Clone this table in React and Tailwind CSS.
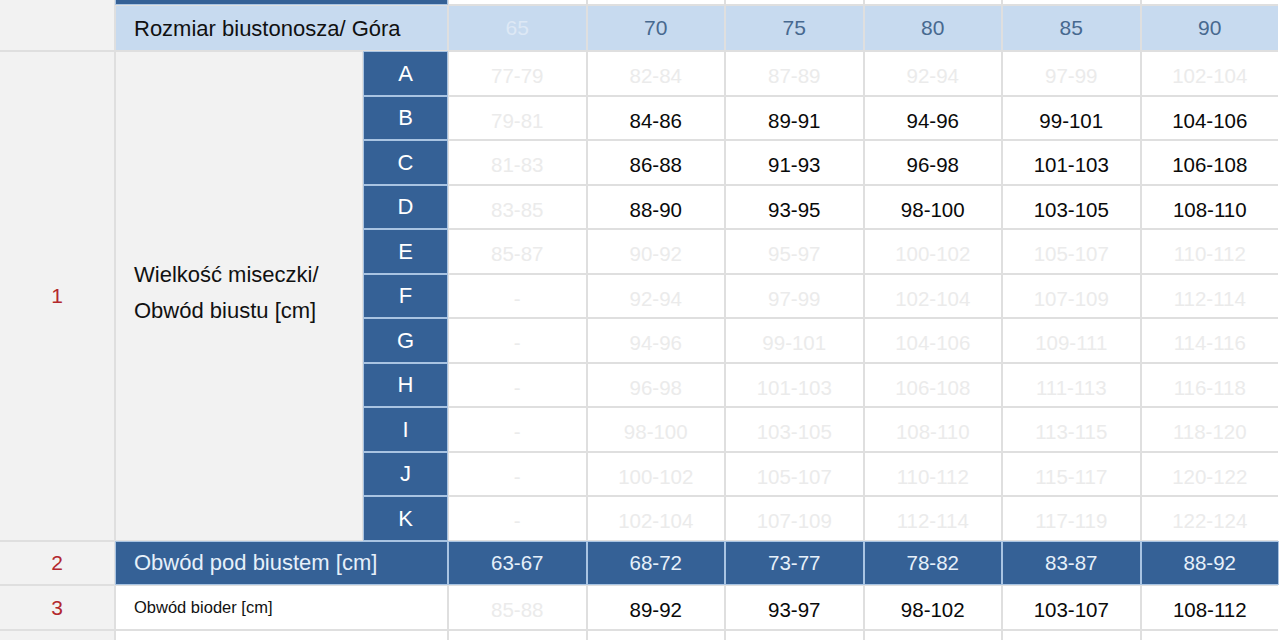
import React from "react";

const cols = ["65", "70", "75", "80", "85", "90"];
const rows = [
  ["A", ["77-79", "82-84", "87-89", "92-94", "97-99", "102-104"], [0, 0, 0, 0, 0, 0]],
  ["B", ["79-81", "84-86", "89-91", "94-96", "99-101", "104-106"], [0, 1, 1, 1, 1, 1]],
  ["C", ["81-83", "86-88", "91-93", "96-98", "101-103", "106-108"], [0, 1, 1, 1, 1, 1]],
  ["D", ["83-85", "88-90", "93-95", "98-100", "103-105", "108-110"], [0, 1, 1, 1, 1, 1]],
  ["E", ["85-87", "90-92", "95-97", "100-102", "105-107", "110-112"], [0, 0, 0, 0, 0, 0]],
  ["F", ["-", "92-94", "97-99", "102-104", "107-109", "112-114"], [0, 0, 0, 0, 0, 0]],
  ["G", ["-", "94-96", "99-101", "104-106", "109-111", "114-116"], [0, 0, 0, 0, 0, 0]],
  ["H", ["-", "96-98", "101-103", "106-108", "111-113", "116-118"], [0, 0, 0, 0, 0, 0]],
  ["I", ["-", "98-100", "103-105", "108-110", "113-115", "118-120"], [0, 0, 0, 0, 0, 0]],
  ["J", ["-", "100-102", "105-107", "110-112", "115-117", "120-122"], [0, 0, 0, 0, 0, 0]],
  ["K", ["-", "102-104", "107-109", "112-114", "117-119", "122-124"], [0, 0, 0, 0, 0, 0]],
];
const under = ["63-67", "68-72", "73-77", "78-82", "83-87", "88-92"];
const hips = ["85-88", "89-92", "93-97", "98-102", "103-107", "108-112"];

const blue = "bg-[#356196] shadow-[0_0_0_1px_#a9c4e2]";

export default function App() {
  return (
    <div
      className="w-[1280px] h-[640px] overflow-hidden bg-white"
      style={{ fontFamily: '"Liberation Sans", Arial, sans-serif' }}
    >
      <div className="grid w-[1278px] bg-[#dfdfdf] gap-[2px] grid-cols-[114px_246px_83px_repeat(6,136.5px)] grid-rows-[4px_44px_repeat(14,42.5px)] pr-[2px]">
        {/* top partial row */}
        <div className="row-span-2 bg-[#f2f2f2]" />
        <div className={"col-span-2 " + blue} />
        {cols.map((c) => (
          <div key={"t" + c} className="bg-white" />
        ))}

        {/* header */}
        <div className="col-span-2 bg-[#c7daef] flex items-center pl-[18px] text-[22px] text-[#111]">
          Rozmiar biustonosza/ Góra
        </div>
        {cols.map((c, i) => (
          <div
            key={"h" + c}
            className={
              "bg-[#c7daef] flex items-center justify-center text-[21px] " +
              (i === 0 ? "text-[#dde8f5]" : "text-[#47698f]")
            }
          >
            {c}
          </div>
        ))}

        {/* cup rows */}
        <div className="row-span-11 bg-[#f2f2f2] flex items-center justify-center text-[21px] text-[#b3282d]">
          1
        </div>
        <div className="row-span-11 bg-[#f2f2f2] flex items-center pl-[18px] pb-[6px] text-[22px] leading-[36px] text-[#111]">
          <div>
            Wielkość miseczki/
            <br />
            Obwód biustu [cm]
          </div>
        </div>
        {rows.map(([letter, vals, dark]) => (
          <React.Fragment key={letter}>
            <div className={blue + " flex items-center justify-center text-[22px] text-white"}>
              {letter}
            </div>
            {vals.map((v, i) => (
              <div
                key={letter + i}
                className={
                  "bg-white flex items-center justify-center pt-[7px] text-[20.5px] " +
                  (dark[i] ? "text-[#0a0a0a]" : "text-[#ebebeb]")
                }
              >
                {v}
              </div>
            ))}
          </React.Fragment>
        ))}

        {/* row 2 */}
        <div className="bg-[#f2f2f2] flex items-center justify-center text-[21px] text-[#b3282d]">
          2
        </div>
        <div className={"col-span-2 flex items-center pl-[18px] text-[22px] text-[#e6f0fa] " + blue}>
          Obwód pod biustem [cm]
        </div>
        {under.map((v) => (
          <div
            key={"u" + v}
            className={"flex items-center justify-center pt-[2px] text-[20.5px] text-[#e6f0fa] " + blue}
          >
            {v}
          </div>
        ))}

        {/* row 3 */}
        <div className="bg-[#f2f2f2] flex items-center justify-center text-[21px] text-[#b3282d]">
          3
        </div>
        <div className="col-span-2 bg-white flex items-center pl-[18px] text-[16.5px] text-[#111]">
          Obwód bioder [cm]
        </div>
        {hips.map((v, i) => (
          <div
            key={"hp" + v}
            className={
              "bg-white flex items-center justify-center pt-[6px] text-[20.5px] " +
              (i === 0 ? "text-[#ebebeb]" : "text-[#0a0a0a]")
            }
          >
            {v}
          </div>
        ))}

        {/* row 4 partial */}
        <div className="bg-[#f2f2f2]" />
        <div className="col-span-2 bg-white" />
        {cols.map((c) => (
          <div key={"b" + c} className="bg-white" />
        ))}
      </div>
    </div>
  );
}
